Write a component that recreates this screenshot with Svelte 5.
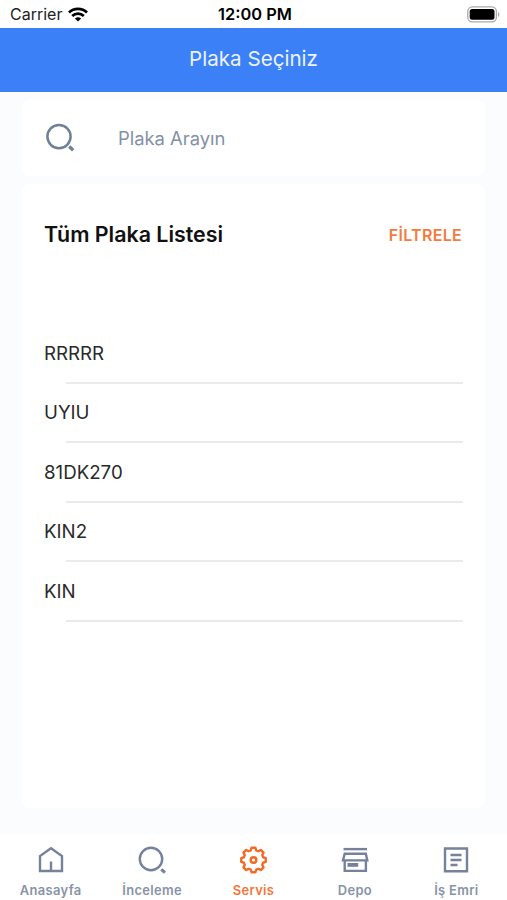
<script>
	let search = '';
	let active = 'servis';

	const plates = ['RRRRR', 'UYIU', '81DK270', 'KIN2', 'KIN'];

	const tabs = [
		{ id: 'anasayfa', label: 'Anasayfa' },
		{ id: 'inceleme', label: 'İnceleme' },
		{ id: 'servis', label: 'Servis' },
		{ id: 'depo', label: 'Depo' },
		{ id: 'isemri', label: 'İş Emri' }
	];

	// Outline of the eight-toothed gear
	function gearPath() {
		const points = [];
		for (let i = 0; i < 8; i++) {
			for (const [offset, r] of [[-16, 10], [-9, 12.4], [9, 12.4], [16, 10]]) {
				const a = ((i * 45 + offset - 90) * Math.PI) / 180;
				points.push(`${(14.5 + r * Math.cos(a)).toFixed(2)} ${(15 + r * Math.sin(a)).toFixed(2)}`);
			}
		}
		return `M${points.join('L')}Z`;
	}
</script>

<div class="app">
	<div class="status-bar">
		<div class="carrier">
			<span>Carrier</span>
			<svg width="20" height="15" viewBox="0 0 20 15" aria-hidden="true">
				<g fill="none" stroke="#000" stroke-width="2.7">
					<path d="M1 5.5C6 .6 14 .6 19 5.5" />
					<path d="M4.2 9C7.5 5.8 12.5 5.8 15.8 9" />
				</g>
				<path d="M6.9 11.4C8.7 9.8 11.3 9.8 13.1 11.4L10 14.5Z" />
			</svg>
		</div>
		<span class="clock">12:00 PM</span>
		<svg class="battery" width="33" height="17" viewBox="0 0 33 17" aria-hidden="true">
			<rect x=".8" y=".8" width="28.6" height="15" rx="4.5" fill="#fff" stroke="#aaa" stroke-width="1.3" />
			<rect x="2.7" y="2.9" width="24.8" height="10.8" rx="2.5" />
			<path d="M31 6v5c1.8-.8 1.8-4.2 0-5z" fill="#aaa" />
		</svg>
	</div>

	<header>
		<h1>Plaka Seçiniz</h1>
	</header>

	<main>
		<label class="card search">
			<svg width="32" height="32" viewBox="0 0 32 32" aria-hidden="true">
				<circle cx="15" cy="14.6" r="11.6" />
				<path d="M25.2 24.6l4 3.6" stroke-width="3.4" />
			</svg>
			<input type="text" placeholder="Plaka Arayın" bind:value={search} />
		</label>

		<section class="card list">
			<div class="list-header">
				<h2>Tüm Plaka Listesi</h2>
				<button class="filter" type="button">FİLTRELE</button>
			</div>
			<ul>
				{#each plates as plate}
					<li>{plate}</li>
				{/each}
			</ul>
		</section>
	</main>

	<nav>
		{#each tabs as tab}
			<button class="tab" class:active={active === tab.id} type="button" on:click={() => (active = tab.id)}>
				<svg width="30" height="30" viewBox="0 0 30 30" aria-hidden="true">
					{#if tab.id === 'anasayfa'}
						<path d="M4 26V11L15 3.2L26 11V26Z" />
						<path d="M15 26V16.5" />
					{:else if tab.id === 'inceleme'}
						<circle cx="14" cy="14" r="11.2" />
						<path d="M24.2 24.4l3.8 3.2" stroke-width="3.2" />
					{:else if tab.id === 'servis'}
						<path d={gearPath()} />
						<circle cx="14.5" cy="15" r="2.8" />
					{:else if tab.id === 'depo'}
						<path d="M3.5 4.1H27" />
						<path d="M4.7 8.7H25.8L27.3 15.4H3Z" />
						<path d="M4.7 15.4V25.9H25.9V15.4" />
						<path d="M7.5 19.9H18.2" stroke-width="3.8" />
					{:else}
						<path d="M4 3.5H26V26.3H4Z" />
						<path d="M9.5 10H20.5M9.5 15H20.5M9.5 20H16.5" />
					{/if}
				</svg>
				<span>{tab.label}</span>
			</button>
		{/each}
	</nav>
</div>

<style>
	:global(body) {
		margin: 0;
	}

	.app {
		display: flex;
		flex-direction: column;
		height: 900px;
		font-family: Inter, 'Liberation Sans', sans-serif;
		background: #fafcfe;
		color: #1c1c1e;
	}

	.status-bar {
		box-sizing: border-box;
		display: grid;
		grid-template-columns: 1fr auto 1fr;
		align-items: center;
		height: 28px;
		padding: 0 7px 0 10px;
		background: #fff;
		color: #000;
	}

	.carrier {
		display: flex;
		align-items: center;
		gap: 6px;
		font-size: 16px;
		color: #222;
	}

	.clock {
		font-size: 16.4px;
		font-weight: 600;
	}

	.battery {
		justify-self: end;
	}

	header {
		display: flex;
		align-items: center;
		justify-content: center;
		height: 64px;
		background: #3b80f6;
	}

	h1 {
		margin: 0 0 4px;
		font-size: 20.6px;
		font-weight: 400;
		color: #eaf3ff;
	}

	main {
		flex: 1;
		display: flex;
		flex-direction: column;
		gap: 8px;
		padding: 8px 22px 26px;
	}

	.card {
		background: #fff;
		border-radius: 8px;
	}

	.search {
		display: flex;
		align-items: center;
		gap: 42px;
		height: 76px;
		padding: 0 22px;
	}

	svg {
		display: block;
		flex: none;
	}

	.search svg {
		fill: none;
		stroke: #718096;
		stroke-width: 2.5;
	}

	input {
		flex: 1;
		min-width: 0;
		padding: 0;
		border: 0;
		outline: 0;
		background: none;
		font: inherit;
		font-size: 18.4px;
		color: #1c1c1e;
	}

	input::placeholder {
		color: #8490a8;
		opacity: 1;
	}

	.list {
		flex: 1;
		padding: 35px 22px 0;
	}

	.list-header {
		display: flex;
		align-items: center;
		justify-content: space-between;
		height: 30px;
		padding-right: 1px;
	}

	h2 {
		margin: 0;
		font-size: 21.4px;
		font-weight: 600;
		color: #111;
	}

	button {
		padding: 0;
		border: 0;
		background: none;
		font: inherit;
		cursor: pointer;
	}

	.filter {
		padding-top: 2px;
		font-size: 16px;
		font-weight: 600;
		letter-spacing: 0.3px;
		color: #f47b3e;
	}

	ul {
		margin: 75px 0 0;
		padding: 0;
		list-style: none;
	}

	li {
		box-sizing: border-box;
		height: 59.4px;
		padding-top: 18px;
		font-size: 18.7px;
		line-height: 24px;
		color: #2a2a2a;
	}

	/* Indented divider under each row */
	li::after {
		content: '';
		display: block;
		height: 2px;
		margin: 16px 0 0 22px;
		background: #eaeaeb;
	}

	nav {
		display: flex;
		height: 66px;
		background: #fff;
	}

	.tab {
		flex: 1;
		display: flex;
		flex-direction: column;
		align-items: center;
		gap: 8px;
		padding-top: 11px;
		font-size: 12.9px;
		font-weight: 600;
		line-height: 16px;
		letter-spacing: 0.35px;
		color: #8893a8;
	}

	.tab svg {
		fill: none;
		stroke: #76819b;
		stroke-width: 2.4;
	}

	.tab.active {
		color: #f4753a;
	}

	.tab.active svg {
		stroke: #f26a24;
		stroke-linejoin: round;
	}
</style>
